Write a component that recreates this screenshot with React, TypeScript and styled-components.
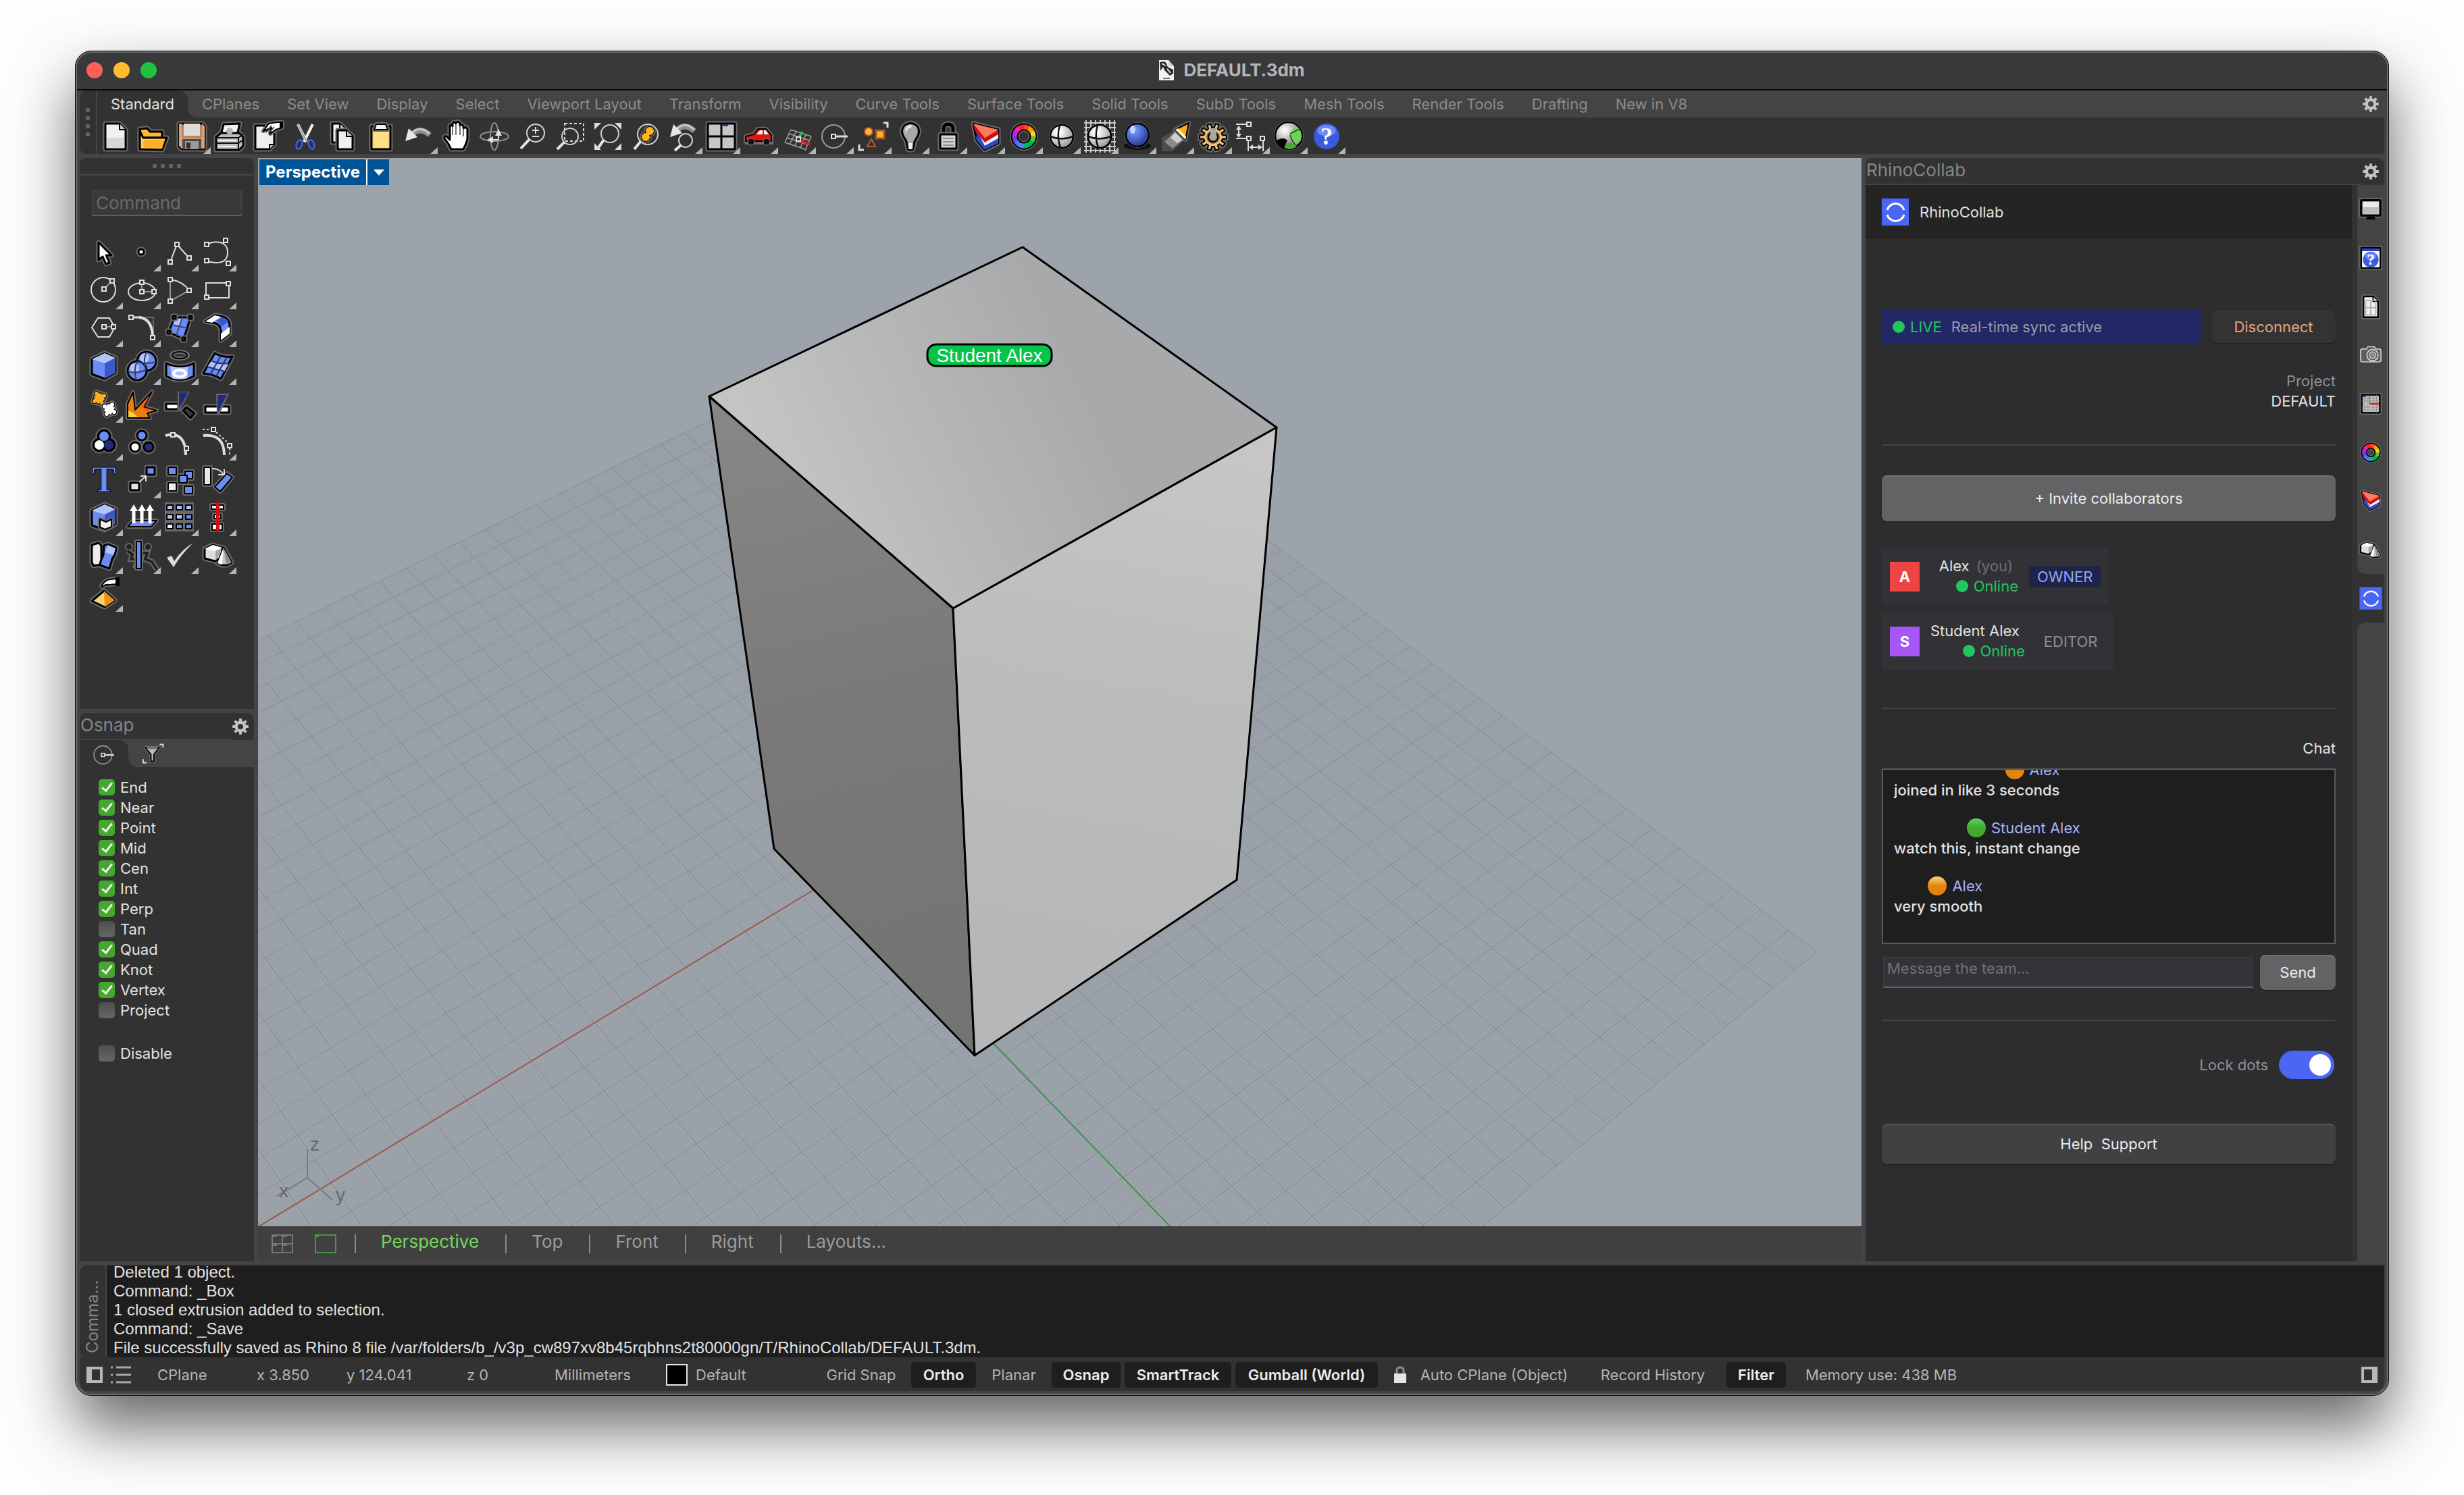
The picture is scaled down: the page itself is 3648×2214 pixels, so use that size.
import React, { useId, useState } from 'react';
import styled, { createGlobalStyle, css } from 'styled-components';

const C = {
  frame: '#444444',
  panel: '#323232',
  dark: '#1e1e1e',
  text: '#e2e2e2',
  dim: '#868686',
  halo: '#6a6a6a',
  blue: '#6b8cf5',
  pale: '#b4c4fa',
  navy: '#232b78',
  live: '#22c65f',
};
const UI = `Inter, "Liberation Sans", sans-serif`;

const Global = createGlobalStyle`
  * { box-sizing: border-box; }
  body { margin: 0; background: #fdfdfd; font-family: ${UI}; font-size: 22px; line-height: 30px; color: ${C.text}; }
  button, input { font: inherit; color: inherit; margin: 0; }
  button { border: 0; padding: 0; background: none; cursor: pointer; }
`;

/* ---------- icon drawing helpers ---------- */

type Part = [string, string];
const circ = (x: number, y: number, r: number, ry = r) =>
  `M${x - r} ${y}a${r} ${ry} 0 1 0 ${2 * r} 0a${r} ${ry} 0 1 0 ${-2 * r} 0Z`;
const box = (x: number, y: number, w: number, h: number) => `M${x} ${y}h${w}v${h}h${-w}Z`;
const gear = (x: number, y: number, ro: number, ri: number, n = 8) => {
  let d = '';
  for (let i = 0; i < n; i++) {
    const a = (i / n) * Math.PI * 2;
    const p = (r: number, o: number) => `${(x + r * Math.cos(a + o)).toFixed(2)} ${(y + r * Math.sin(a + o)).toFixed(2)}`;
    const w = Math.PI / n;
    d += `${i ? 'L' : 'M'}${p(ri, -w * 0.62)}L${p(ro, -w * 0.42)}L${p(ro, w * 0.42)}L${p(ri, w * 0.62)}`;
  }
  return d + 'Z';
};

/* Filled shapes with the black edge and grey halo shared by the icon set.
   With merge, the parts share one outer edge. */
const Solid = ({ p, w = 3, merge = false }: { p: Part[]; w?: number; merge?: boolean }) => (
  <g strokeLinejoin="round">
    {p.map(([d], i) => <path key={`h${i}`} d={d} fill="none" stroke={C.halo} strokeWidth={w + 4} />)}
    {p.map(([d, f], i) => <path key={`s${i}`} d={d} fill={f} stroke="#000" strokeWidth={w} />)}
    {merge && p.map(([d, f], i) => <path key={`m${i}`} d={d} fill={f} />)}
  </g>
);
const Line = ({ d, c = '#dcdcdc', w = 2, dash }: { d: string; c?: string; w?: number; dash?: string }) => (
  <path d={d} fill="none" stroke={c} strokeWidth={w} strokeDasharray={dash} />
);
const Nodes = ({ at }: { at: [number, number][] }) => (
  <>{at.map(([x, y], i) => <rect key={i} x={x - 3} y={y - 3} width={6} height={6} fill={C.panel} stroke="#e0e0e0" strokeWidth={2} />)}</>
);
const Fill = ({ d, f }: { d: string; f: string }) => <path d={d} fill={f} />;

const Wheel = ({ x = 28, y = 28, r = 14, w = 7 }) => {
  const cs = ['#ff4a1c', '#ff9d00', '#ffd21f', '#4fc83a', '#00b83c', '#00b86a', '#4a86f0', '#5a6cf2', '#6a3fe0', '#c01ff0', '#ff1fb0', '#ff1f2a'];
  return (
    <g>
      <circle cx={x} cy={y} r={r} fill="none" stroke={C.halo} strokeWidth={w + 7} />
      <circle cx={x} cy={y} r={r} fill="none" stroke="#000" strokeWidth={w + 4} />
      {cs.map((c, i) => {
        const a = (i * Math.PI) / 6 - Math.PI / 2;
        const b = a + Math.PI / 6 + 0.03;
        return <path key={i} d={`M${x + r * Math.cos(a)} ${y + r * Math.sin(a)}A${r} ${r} 0 0 1 ${x + r * Math.cos(b)} ${y + r * Math.sin(b)}`} fill="none" stroke={c} strokeWidth={w} />;
      })}
    </g>
  );
};
const Lens = ({ x, y, r, hx, hy }: { x: number; y: number; r: number; hx: number; hy: number }) => {
  const k = r * 0.7;
  return (
    <>
      <circle cx={x} cy={y} r={r} fill="none" stroke="#d0d0d0" strokeWidth={2} />
      <path d={`M${x - k} ${y + k}L${hx} ${hy}`} stroke="#e4e4e4" strokeWidth={4} />
    </>
  );
};
const Ball = ({ x = 28, y = 28, r = 17, from = '#ffffff', to = '#8c8c8c' }) => {
  const id = useId();
  return (
    <>
      <radialGradient id={id} cx="0.35" cy="0.3" r="0.8"><stop offset="0.1" stopColor={from} /><stop offset="1" stopColor={to} /></radialGradient>
      <circle cx={x} cy={y} r={r + 2} fill={C.halo} />
      <circle cx={x} cy={y} r={r} fill={`url(#${id})`} stroke="#000" strokeWidth={2.5} />
    </>
  );
};
const Wedge = () => (
  <>
    <Solid p={[['M9 9L46 18V38L26 48L14 34Z', '#2c49c0']]} />
    <Fill d="M9 9L26 42L46 31V18L26 30Z" f="#f4f4f4" />
    <Fill d="M12 27L26 42L46 31V38L26 48L14 34Z" f="#2c49c0" />
    <Fill d="M9 9L26 30L46 18V25L26 37L11 19Z" f="#cf1010" />
    <Fill d="M9 9L46 18L26 30Z" f="#ff7a5c" />
  </>
);
const Solids = () => (
  <>
    <Solid p={[['M9 19L21 13L35 17V31L24 37L9 33Z', '#dedede'], ['M37 17L49 39Q39 47 28 40Z', '#c4c4c4']]} />
    <Fill d="M9 19L21 13L35 17L25 22Z" f="#fff" />
    <Fill d="M25 22L34 18L28 33L25 36Z" f="#a4a4a4" />
    <Fill d="M37 17L35 42Q31 42 28 40Z" f="#fff" />
    <Fill d="M37 17L49 39Q45 42 41 42Z" f="#8c8c8c" />
  </>
);
const SyncLogo = () => (
  <>
    <rect width={40} height={40} fill="#4a66f2" />
    <path d="M8 17A13 13 0 0 1 33 17M8 24A13 13 0 0 0 33 24" fill="none" stroke="#fff" strokeWidth={3} />
  </>
);
const Hand = () => (
  <>
    <Solid w={3} p={[['M20 47Q16 38 10 31Q9 27 13 28L18 33V13Q19 9 22 13V9Q24 5 27 9V8Q30 4 33 9V12Q36 9 38 13V16Q42 13 44 17V32Q42 40 38 47Z', '#fff']]} />
    <Line c="#444" w={1.5} d="M22 13V26M27 10V26M33 11V26M38 15V28" />
  </>
);
const Question = ({ r = 19, size = 36 }) => (
  <>
    <circle cx={28} cy={28} r={r} fill="#3a5ae0" />
    <ellipse cx={28} cy={28 - r * 0.45} rx={r * 0.72} ry={r * 0.45} fill="#6f8af5" />
    <text x={28} y={28 + size * 0.34} fontFamily="Liberation Serif" fontWeight={700} fontSize={size} textAnchor="middle" fill="#fff">?</text>
  </>
);
const SnapRing = () => (
  <>
    <circle cx={26} cy={28} r={17} fill="none" stroke="#9a9a9a" strokeWidth={2} />
    <Line d="M30 28H47" w={3} />
    <Nodes at={[[26, 28]]} />
  </>
);
const BackArrow = () => (
  <>
    <Line d="M18 25Q30 13 44 26" c="#8e8e8e" w={8} />
    <Line d="M18 23Q30 11 44 24" c="#c8c8c8" w={3} />
    <Fill d="M8 35L13 16L26 29Z" f="#e6e6e6" />
  </>
);
const Paper = ({ x = 12, y = 9, w = 30, h = 38 }) => (
  <>
    <Solid p={[[`M${x} ${y}h${w - 9}l9 9v${h - 9}h${-w}Z`, '#f0f0f0']]} />
    <path d={`M${x + w - 9} ${y}v9h9`} fill="#cfcfcf" stroke="#000" strokeWidth={2} />
  </>
);

/* ---------- toolbar icons, drawn on a 56 x 54 cell ---------- */

const toolbar: [string, React.ReactNode, boolean?][] = [
  ['New', <><Paper /><Fill d="M14 30H40V45H14Z" f="#d8d8d8" /></>],
  ['Open', <><Solid p={[['M7 17L18 16L22 21H40V30H7Z', '#ffb92e'], ['M7 47V20L12 30H47L40 48Z', '#fbcf63']]} /><Fill d="M12 38L14 33H44L40 46H13Z" f="#ffb02a" /></>],
  ['Save', <><Solid p={[['M9 9H43L47 13V47H13L9 43Z', '#bd8564']]} /><Fill d="M9 9H13V31H43V9L47 13V46H13L9 42Z" f="#d8a27c" /><Fill d={box(16, 9, 24, 18)} f="#dcdcdc" /><Fill d={box(14, 32, 28, 15)} f="#4c4c4c" /><Fill d={box(18, 35, 20, 12)} f="#9a9a9a" /><Fill d={box(20, 37, 6, 9)} f="#333" /></>, true],
  ['Print', <><Solid p={[['M19 10L43 9L38 30H14Z', '#f4f4f4'], ['M8 29L15 23H42L48 29V42L42 48H8Z', '#bdbdbd']]} /><circle cx={28} cy={20} r={5} fill="#b9b9b9" /><Line c="#111" d="M8 30H41L48 25M8 38H41L48 33M41 30V47" /><Line c="#f4f4f4" d="M11 34H38M11 43H38" /></>],
  ['Document properties', <><Solid p={[['M10 12H38V40L31 47H10Z', '#eeeeee']]} /><path d="M31 47V40H38" fill="#bbb" stroke="#000" strokeWidth={2} /><Solid w={2} p={[['M22 20L30 9L42 7H50V15L40 18L32 24L34 15Z', '#fff']]} /><Line c="#333" w={1.5} d="M26 22L34 12M30 23L38 14" /><Fill d={box(46, 6, 5, 10)} f="#000" /></>],
  ['Cut', <><Line d="M17 10L30 36M39 10L26 36" w={4} c="#efefef" /><Line d="M17 10L30 36" w={2} c="#9b9b9b" /><ellipse cx={19} cy={40} rx={4} ry={7} fill="none" stroke="#3d5cf0" strokeWidth={2.5} transform="rotate(20 19 40)" /><ellipse cx={37} cy={40} rx={4} ry={7} fill="none" stroke="#3d5cf0" strokeWidth={2.5} transform="rotate(-20 37 40)" /></>],
  ['Copy', <><Paper x={12} y={9} w={20} h={28} /><Paper x={20} y={19} w={22} h={28} /></>],
  ['Paste', <><Solid p={[['M14 13H42V47H14Z', '#fbd36c']]} /><Fill d={box(17, 20, 22, 24)} f="#fddf86" /><Solid w={2} p={[['M21 10H35L38 18H18Z', '#f3f3f3']]} /></>],
  ['Undo', <BackArrow />, true],
  ['Pan', <Hand />],
  ['Rotate view', <><ellipse cx={28} cy={28} rx={21} ry={7} fill="none" stroke="#8e8e8e" strokeWidth={2} /><ellipse cx={28} cy={28} rx={6} ry={20} fill="none" stroke="#8e8e8e" strokeWidth={2} /><Fill d="M17 33L26 28V38ZM34 17L39 27H29Z" f="#e2e2e2" /><Line d="M24 33H34M34 24V33" /></>],
  ['Zoom', <><Lens x={33} y={23} r={13} hx={11} hy={46} /><Line d="M28 19H38M33 14V24M28 28H38" /></>],
  ['Zoom window', <><Line d="M20 9H48V35H20Z" dash="4 3" /><Lens x={28} y={28} r={12} hx={9} hy={47} /></>],
  ['Zoom extents', <><Lens x={31} y={24} r={13} hx={13} hy={46} /><Fill d="M8 8H18L8 18ZM48 8V18L38 8ZM48 48H38L48 38ZM8 48V38L18 48Z" f="#dcdcdc" /></>],
  ['Zoom selected', <><Lens x={31} y={25} r={15} hx={11} hy={47} /><Solid w={2} merge p={[[circ(34, 20, 6), '#ffb81c'], [circ(28, 29, 6), '#ffb81c']]} /></>],
  ['Undo view change', <><g transform="translate(0 -6)"><BackArrow /></g><Lens x={31} y={34} r={10} hx={15} hy={49} /></>, true],
  ['Four viewports', <><Solid p={[[box(8, 9, 40, 38), '#c6c6c6']]} /><Line c="#000" w={3} d="M28 9V47M8 28H48" /><Fill d={box(30, 10, 8, 3)} f="#26348f" /></>, true],
  ['Shade', <><Fill d={box(7, 36, 42, 4)} f="#707070" /><Solid w={2} p={[['M8 35V28L20 25L26 17H38L46 26V35Z', '#e01212']]} /><Fill d="M24 25L29 19H33V25ZM35 19H38L42 25H35Z" f="#f3f3f3" /><circle cx={16} cy={36} r={5} fill="#111" stroke="#888" /><circle cx={39} cy={36} r={5} fill="#111" stroke="#888" /></>, true],
  ['Construction planes', <><Line c="#a2a2a2" w={1.5} d="M19 18L49 28M16 24L46 34M13 30L43 40M10 37L40 47M19 18L10 37M27 20L17 40M34 23L25 42M41 25L33 45M49 28L40 49" /><Line c="#2fb64a" w={4} d="M31 30L36 21" /><Line c="#e01818" w={4} d="M32 34L47 40" /><Nodes at={[[30, 32]]} /></>, true],
  ['Object snap', <SnapRing />, true],
  ['Select', <><Line w={3} d="M44 8H50V15M8 40V48H15" /><circle cx={22} cy={21} r={6} fill="#ffb81c" stroke="#a3503a" strokeWidth={2} /><rect x={33} y={19} width={12} height={12} fill="#ffb81c" stroke="#a3503a" strokeWidth={3} /><Line c="#b05a42" w={2} d="M26 32L32 43H20Z" /></>, true],
  ['Hide', <><Solid p={[['M23 42Q23 35 18 29Q13 20 18 13Q28 4 38 13Q43 20 38 29Q33 35 33 42L31 48H25Z', '#a8a8a8']]} /><Fill d="M20 18Q22 11 29 11Q32 14 26 16Q22 18 22 24Z" f="#e4e4e4" /><Fill d={box(25, 38, 6, 9)} f="#efefef" /></>, true],
  ['Lock', <><path d="M21 26V17Q21 10 28 10T35 17V26" fill="none" stroke={C.halo} strokeWidth={9} /><path d="M21 26V17Q21 10 28 10T35 17V26" fill="none" stroke="#000" strokeWidth={5} /><Solid p={[[box(16, 25, 24, 21), '#d4d4d4']]} /><Line c="#8f8f8f" d="M20 31H36M20 36H36M20 41H36" /></>, true],
  ['Layers', <Wedge />, true],
  ['Properties', <Wheel />, true],
  ['Display mode', <><Ball /><Line c="#111" w={2.5} d="M25 11Q20 28 26 45M11 28Q28 35 45 28" /></>, true],
  ['Render mesh', <><Line c="#c9c9c9" d="M8 4V52M15 4V52M22 4V52M29 4V52M36 4V52M43 4V52M50 4V52M5 8H52M5 15H52M5 22H52M5 29H52M5 36H52M5 43H52M5 49H52" /><Ball /><Line c="#111" w={2.5} d="M25 11Q20 28 26 45M11 28Q28 35 45 28" /></>, true],
  ['Render', <><ellipse cx={28} cy={42} rx={20} ry={6} fill="#111" /><Ball y={26} from="#6f95ff" to="#1c2a86" /><ellipse cx={21} cy={18} rx={4} ry={6} fill="#c4d6ff" /></>, true],
  ['Spotlight', <><Fill d="M28 18L44 32L24 50H8V30Z" f="#4c4c4c" /><Fill d="M29 20L42 31L24 46L12 36Z" f="#8a8a8a" /><Fill d="M29 20L42 31L31 38L21 30Z" f="#d0d0d0" /><Solid w={2} p={[['M28 18L48 8L43 33Z', '#ffac1e']]} /><Fill d="M28 18L32 16L44 28L43 33Z" f="#fff0b8" /></>, true],
  ['Options', <><Solid w={2} p={[[gear(28, 29, 20, 14, 10), '#f5bd6c']]} /><Solid w={2} p={[[circ(28, 29, 7), '#c48a3c']]} /><Fill d="M24 16H33V31Q28 35 24 31Z" f="#a8a8a8" /></>, true],
  ['Dimension', <><Line d="M6 10H22M6 31H22M46 34V50M24 34V50M10 15V27M27 44H43" /><Fill d="M10 12L14 18H6ZM10 30L6 24H14ZM25 44L31 40V48ZM45 44L39 40V48Z" f="#dcdcdc" /><Nodes at={[[25, 10], [25, 31], [45, 31]]} /></>, true],
  ['Grasshopper', <><Ball x={28} y={27} r={20} from="#f4f4f4" to="#4c4c4c" /><Fill d="M30 24Q36 13 43 16Q49 24 46 34Q42 40 36 40Q30 34 30 24Z" f="#6fd05a" /><Fill d="M22 45Q24 36 32 38L40 43Q30 50 22 45Z" f="#4aa83a" /><Fill d="M10 34Q20 28 26 34L24 38L21 45Q13 42 10 34Z" f="#000" /><Line c="#1d4a16" w={1.5} d="M30 24Q38 20 44 17M30 26Q33 36 38 40" /></>, true],
  ['Help', <Question />, true],
];

/* ---------- palette icons, drawn on a 56 x 56 cell ---------- */

const Cube = () => (
  <>
    <Solid p={[['M10 18L29 9L45 16V38L29 47L10 40Z', C.blue]]} />
    <Fill d="M10 18L29 9L45 16L29 24Z" f={C.pale} />
    <Fill d="M29 24L45 16V38L29 47Z" f="#3c58c4" />
  </>
);
const puzzle = (f: string): Part[] => [[box(-6, -6, 12, 12), f], [circ(-8, 0, 3), f], [circ(8, 0, 3), f], [circ(0, -8, 3), f], [circ(0, 8, 3), f]];

const palette: [string, React.ReactNode, boolean?][] = [
  ['Select objects', <Solid p={[['M20 13V39L26 34L31 45L36 43L31 32H39Z', '#fff']]} />],
  ['Point', <Solid w={3} p={[[circ(27, 27, 4), '#fff']]} />, true],
  ['Polyline', <><Line d="M14 42L24 16L42 36" /><Nodes at={[[14, 42], [24, 16], [42, 36]]} /></>, true],
  ['Control point curve', <><Line d="M12 16L20 13Q43 10 43 28Q43 44 24 43L12 41" /><Nodes at={[[12, 16], [40, 10], [12, 40], [44, 44]]} /></>, true],
  ['Circle', <><circle cx={27} cy={27} r={18} fill="none" stroke="#dcdcdc" strokeWidth={2} /><Line c="#999" d="M28 26L40 14" /><Nodes at={[[28, 26], [40, 14]]} /></>, true],
  ['Ellipse', <><ellipse cx={28} cy={30} rx={20} ry={13} fill="none" stroke="#dcdcdc" strokeWidth={2} /><Line c="#999" d="M28 16V30H46" /><Nodes at={[[28, 16], [28, 30], [46, 30]]} /></>, true],
  ['Arc', <><Line c="#999" d="M14 12V44L42 28" /><Line d="M14 12Q32 14 42 28" /><Nodes at={[[14, 12], [42, 28], [14, 44]]} /></>, true],
  ['Rectangle', <><Line d="M11 17H45V39H11Z" /><Nodes at={[[44, 18], [12, 38]]} /></>, true],
  ['Polygon', <><Line d="M10 27L19 13H36L44 27L36 41H19Z" /><Line c="#999" d="M28 26H42" /><Nodes at={[[28, 26], [42, 26]]} /></>, true],
  ['Fillet curves', <><Line c="#999" w={1} d="M12 12H45V42" /><Line w={4} d="M24 12Q43 14 44 40" /><Line w={3} d="M12 12H28" /><Nodes at={[[12, 12], [44, 42]]} /></>, true],
  ['Surface from points', <><Solid p={[['M20 12H44L34 44L12 34Z', C.blue]]} /><Fill d="M22 14H31L27 24L19 22Z" f={C.pale} /><Line c="#3a4a7a" d="M16 23L39 28M32 12L23 39" /><Solid w={3} p={[[box(18, 10, 4, 4), '#fff'], [box(42, 10, 4, 4), '#fff'], [box(32, 42, 4, 4), '#fff'], [box(10, 32, 4, 4), '#fff']]} /></>, true],
  ['Fillet surface', <><Solid p={[['M10 18L24 9Q46 10 46 24V36L33 46V34Q33 20 20 20Z', C.blue]]} /><Fill d="M10 18L24 9L33 11L20 20Z" f="#fff" /><Fill d="M33 36L46 26V36L33 46Z" f="#fff" /><Fill d="M26 17L36 12Q42 14 44 18L34 26Q32 20 26 17Z" f="#3557cf" /></>, true],
  ['Box', <Cube />, true],
  ['Boolean union', <><Solid p={[[circ(35, 21, 14), C.blue], [circ(21, 35, 14), C.blue]]} /><Fill d={circ(32, 16, 7)} f={C.pale} /><Fill d={circ(17, 31, 7)} f={C.pale} /><Line c="#33406c" d="M35 7Q29 20 34 34M21 22Q35 26 49 22M21 21Q15 35 20 49M7 36Q20 40 34 34" /></>, true],
  ['Project curves', <><ellipse cx={28} cy={12} rx={12} ry={5} fill="none" stroke={C.halo} strokeWidth={6} /><ellipse cx={28} cy={12} rx={11} ry={5} fill="none" stroke="#000" strokeWidth={2} /><Solid p={[['M8 24Q28 34 49 24V43Q28 54 8 43Z', C.blue]]} /><Fill d="M14 28Q28 32 40 29V46Q28 50 16 46Z" f={C.pale} /><ellipse cx={28} cy={39} rx={9} ry={5} fill="none" stroke="#fff" strokeWidth={4} /></>, true],
  ['Mesh', <><Solid p={[['M24 9Q36 16 50 14L33 47Q22 40 7 39Z', C.blue]]} /><Fill d="M20 19Q30 26 45 24L38 37Q28 33 13 29Z" f={C.pale} /><Line c="#26336c" d="M33 13L17 41M42 15L26 43M19 20Q30 26 45 24M13 29Q25 33 39 36" /></>, true],
  ['Join', <><g transform="translate(21 20) rotate(-30)"><Solid merge w={2} p={puzzle('#ffae22')} /></g><g transform="translate(36 36) rotate(30)"><Solid merge w={2} p={puzzle('#fff')} /></g></>, true],
  ['Explode', <><Solid w={2} p={[['M7 49V28L15 11L18 37L43 10L31 33L50 38L36 42L40 49Z', '#e8820c']]} /><Fill d="M8 48V38L16 42L22 48Z" f="#ffcf3a" /><Fill d="M26 33L41 14L30 33L47 38L36 40Z" f="#ff5a1c" /></>],
  ['Trim', <><Solid p={[['M33 38L38 33L50 42L44 49Z', '#3a3a3a'], [box(8, 28, 18, 8), '#fff']]} /><Fill d="M25 10H43L28 38H25Z" f={C.halo} /><Fill d="M27 11H41L27 36Z" f={C.navy} /></>],
  ['Split', <><Solid p={[[box(10, 32, 35, 9), '#fff']]} /><Fill d="M26 13H45L31 43H27Z" f={C.halo} /><Fill d="M28 15H42L28 42Z" f={C.navy} /></>],
  ['Group', <Solid w={7} merge p={[[circ(21, 33, 7), '#fff'], [circ(35, 33, 7), C.navy], [circ(28, 20, 7), C.blue]]} />, true],
  ['Ungroup', <Solid w={3} p={[[circ(28, 19, 7), C.blue], [circ(18, 36, 7), '#fff'], [circ(38, 36, 7), C.navy]]} />],
  ['Curve edit points', <><Line w={4} d="M7 19Q37 12 37 48" /><Nodes at={[[18, 18], [38, 38]]} /></>],
  ['Control points on', <><Line w={4} d="M7 19Q38 16 38 48" /><Line w={2} dash="3 3" d="M6 10H20M26 14L44 30M46 38V50" /><Nodes at={[[22, 10], [46, 34]]} /></>, true],
  ['Text', <text x={28} y={46} fontFamily="Liberation Serif" fontWeight={700} fontSize={54} textAnchor="middle" fill={C.blue} stroke="#000" strokeWidth={1}>T</text>],
  ['Move', <><Solid p={[[box(11, 33, 13, 11), '#e4e4e4'], [box(35, 10, 12, 11), C.blue]]} /><Line d="M24 32L33 24M26 23H34V31" /></>, true],
  ['Copy objects', <Solid w={2} p={[[box(11, 10, 12, 11), C.blue], [box(11, 33, 12, 12), '#f0f0f0'], [box(36, 16, 11, 11), C.blue], [box(27, 22, 12, 11), C.blue], [box(35, 38, 12, 11), C.blue]]} />],
  ['Rotate', <><Solid w={2} p={[[box(8, 10, 10, 26), '#e6e6e6'], ['M24 39L42 19L50 25L32 46Z', C.blue]]} /><Line d="M20 12Q32 12 37 21M29 21H38V13" /></>],
  ['Solid edit', <><Cube /><Solid w={2} p={[['M22 31L31 35L39 31V42L30 46L22 43Z', '#f0f0f0']]} /></>, true],
  ['Extrude', <><Solid w={2} p={[['M7 42L15 33H50L42 42Z', C.blue]]} /><Line c="#fff" w={5} d="M16 18V37M28 18V37M40 18V37" /><Fill d="M16 9L22 19H10ZM28 9L34 19H22ZM40 9L46 19H34Z" f="#fff" /></>, true],
  ['Array', <><Fill d={box(6, 6, 43, 43)} f={C.halo} /><Solid w={2} p={[10, 24, 38].flatMap((y, r) => [9, 23, 37].map((x, c): Part => [box(x, y, 9, 7), r === 2 && c === 0 ? '#f0f0f0' : c + r > 2 ? C.blue : C.pale]))} /></>, true],
  ['Align', <><Solid w={2} p={[[box(19, 10, 18, 6), '#f4f4f4'], [box(23, 24, 10, 6), '#f4f4f4'], [box(20, 38, 15, 9), '#f4f4f4']]} /><Fill d={box(26, 6, 5, 44)} f="#d01010" /></>, true],
  ['Bend', <><Solid p={[['M10 13L20 10L24 14V42L12 44V42L10 40Z', '#ececec'], ['M28 14L34 12L46 17Q46 26 40 34L36 48L22 43Q22 38 27 28Z', C.blue]]} /><Fill d="M33 13L45 18L42 28L30 24Z" f={C.pale} /></>, true],
  ['Check objects', <><circle cx={9} cy={16} r={5} fill="#222" stroke={C.halo} strokeWidth={2} /><circle cx={37} cy={16} r={5} fill="#222" stroke={C.halo} strokeWidth={2} /><Line c={C.halo} w={8} d="M7 22L14 27L12 34H22L18 48M26 25H36L33 34L43 38L50 49" /><Line c="#222" w={4} d="M7 22L14 27L12 34H22L18 48M26 25H36L33 34L43 38L50 49" /><Solid w={2} p={[[box(20, 8, 7, 40), C.blue]]} /></>, true],
  ['Accept', <Fill d="M9 32L16 29L20 37Q32 19 48 10Q30 27 19 46Z" f="#dcdcdc" />, true],
  ['Render tools', <Solids />, true],
  ['Drag mode', <><Solid p={[['M28 25L44 39L29 49L10 40Z', '#fbd36c']]} /><Fill d="M28 25L44 39L29 49Z" f="#e8901c" /><Solid w={2} p={[['M24 18Q30 8 38 8L46 7V15L36 16Q30 15 26 19Z', '#fff']]} /><Fill d={box(45, 5, 6, 13)} f="#000" /></>, true],
];

const sideTabs: [string, React.ReactNode][] = [
  ['Display', <><Solid p={[[box(11, 12, 34, 27), '#d8d8d8']]} w={4} /><Fill d={box(14, 15, 28, 21)} f="#bdbdbd" /><Fill d={box(14, 15, 28, 9)} f="#ededed" /><Fill d="M22 41H34L37 46H19Z" f="#000" /></>],
  ['Help', <><Solid w={3} p={[[box(11, 10, 34, 36), '#fff']]} /><Fill d={box(12, 11, 32, 5)} f="#2a44b8" /><g transform="translate(5 8) scale(.82)"><Question r={17} size={34} /></g></>],
  ['Layouts', <><Paper x={15} y={10} w={26} h={37} /><Line c="#aaa" d="M19 17H37V43H19ZM28 17V43M19 30H37" /></>],
  ['Named views', <><path d="M10 20Q10 17 13 17H20L23 13H34L37 17H43Q46 17 46 20V37Q46 40 42 40H14Q10 40 10 37Z" fill="#5c5c5c" stroke="#d0d0d0" strokeWidth={2} /><circle cx={31} cy={28} r={10} fill="#5c5c5c" stroke="#d8d8d8" strokeWidth={2} /><circle cx={31} cy={28} r={6} fill="#8a8a8a" stroke="#ccc" strokeWidth={1.5} /></>],
  ['Named planes', <><Solid w={3} p={[[box(12, 12, 32, 32), '#c0c0c0']]} /><Line c="#8a8a8a" w={1} d="M17 12V44M23 12V44M32 12V44M38 12V44M12 18H44M12 23H44M12 34H44M12 39H44" /><Line c="#3eae3e" w={2} d="M26 13V28" /><Line c="#e01818" w={3} d="M26 28H43" /><Fill d={box(13, 13, 6, 3)} f="#26348f" /></>],
  ['Properties', <Wheel r={12} />],
  ['Layers', <g transform="translate(4 3) scale(.86)"><Wedge /></g>],
  ['Rendering', <g transform="translate(2 4) scale(.88)"><Solids /></g>],
  ['RhinoCollab', <g transform="translate(8 8)"><SyncLogo /></g>],
];

/* ---------- window frame ---------- */

const Page = styled.div`
  display: flex;
  min-height: 100vh;
  padding: 75px 111px 147px;
`;
const Window = styled.div`
  flex: 1;
  min-width: 0;
  display: flex;
  flex-direction: column;
  border: 1px solid #050505;
  border-radius: 24px;
  background: ${C.frame};
  box-shadow: 0 46px 90px rgba(0, 0, 0, 0.6), inset 0 0 0 2px #6c6e6b;
  overflow: hidden;
`;
const TitleBar = styled.header`
  height: 56px;
  margin: 2px 2px 0;
  padding: 0 14px 2px;
  display: grid;
  grid-template-columns: 1fr auto 1fr;
  align-items: center;
  background: #38393b;
  border-bottom: 2px solid #0a0a0a;
  border-radius: 22px 22px 0 0;
`;
const Lights = styled.div`
  display: flex;
  gap: 16px;
`;
const Light = styled.button<{ $c: string }>`
  width: 24px;
  height: 24px;
  border-radius: 50%;
  background: ${(p) => p.$c};
`;
const Title = styled.h1`
  margin: 0;
  display: flex;
  align-items: center;
  gap: 14px;
  font-size: 26px;
  line-height: 32px;
  font-weight: 700;
  color: #b4b5b6;
`;
const Workspace = styled.div`
  flex: 1;
  min-height: 0;
  display: flex;
  flex-direction: column;
  padding: 0 6px 6px;
`;

/* ---------- toolbar ---------- */

const Dock = styled.div`
  display: grid;
  grid-template-columns: 24px minmax(0, 1fr);
  gap: 2px;
`;
const Grip = styled.div<{ $row?: boolean }>`
  display: flex;
  flex-direction: ${(p) => (p.$row ? 'row' : 'column')};
  align-items: center;
  justify-content: center;
  gap: 6px;
  background: ${C.panel};
  border-radius: ${(p) => (p.$row ? '10px 10px 0 0' : '10px 0 0 10px')};
  i { width: 6px; height: 6px; border: 2px solid #727272; border-radius: 50%; }
`;
const Tabs = styled.nav`
  display: flex;
  gap: 1px;
  height: 40px;
`;
const Tab = styled.button<{ $on?: boolean }>`
  position: relative;
  padding: 0 20px;
  white-space: nowrap;
  color: #8c8c8c;
  ${(p) => p.$on && css`
    color: ${C.text};
    background: ${C.panel};
    border-radius: 0 14px 0 0;
    &::after {
      content: '';
      position: absolute;
      right: -14px;
      bottom: 0;
      width: 14px;
      height: 14px;
      background: radial-gradient(circle at 100% 0, transparent 14px, ${C.panel} 14px);
    }
  `}
`;
const GearButton = styled.button`
  width: 40px;
  margin-left: auto;
  display: grid;
  place-items: center;
`;
const ToolRow = styled.div`
  display: flex;
  height: 54px;
  background: ${C.panel};
`;
const Tool = styled.button<{ $more?: boolean }>`
  position: relative;
  width: 56px;
  height: 56px;
  display: block;
  svg { display: block; overflow: visible; }
  ${(p) => p.$more && css`
    &::after {
      content: '';
      position: absolute;
      right: 0;
      bottom: 0;
      border: solid transparent;
      border-width: 0 0 10px 11px;
      border-bottom-color: #b4b4b4;
    }
  `}
`;
const BarTool = styled(Tool)`
  height: 54px;
`;

const Gear = () => (
  <svg width={26} height={26} viewBox="0 0 26 26">
    <path fillRule="evenodd" fill="#c2c2c2" d={gear(13, 13, 12, 8.5) + circ(13, 13, 4)} />
  </svg>
);

/* ---------- left column ---------- */

const Main = styled.div`
  flex: 1;
  min-height: 0;
  margin: 6px 0;
  display: grid;
  grid-template-columns: 258px minmax(0, 1fr) 768px;
  gap: 6px;
`;
const LeftColumn = styled.div`
  display: grid;
  grid-template-rows: 204fr 203fr;
  gap: 6px;
  min-height: 0;
`;
const Panel = styled.section`
  background: ${C.panel};
  border-radius: 10px 10px 0 0;
  min-height: 0;
`;
const GripBar = styled(Grip)`
  height: 26px;
  border-bottom: 2px solid ${C.frame};
`;
const CommandBox = styled.input`
  display: block;
  width: 222px;
  height: 38px;
  margin: 22px 18px 26px;
  padding: 0 5px;
  font-size: 26px;
  background: #393939;
  border: 1px solid #484848;
  border-bottom: 2px solid #606060;
  outline: none;
  &::placeholder { color: #6a6a6a; opacity: 1; }
`;
const Palette = styled.div`
  display: grid;
  grid-template-columns: repeat(4, 56px);
  padding-left: 8px;
`;
const PanelHead = styled.div`
  display: flex;
  height: 40px;
  h2 {
    flex: 1;
    margin: 0;
    padding-left: 1px;
    font-size: 26px;
    line-height: 36px;
    font-weight: 400;
    color: ${C.dim};
    border-bottom: 2px solid ${C.frame};
  }
  button { width: 34px; padding-right: 6px; }
`;
const IconTabs = styled.div`
  display: flex;
  height: 40px;
  background: ${C.frame};
`;
const IconTab = styled(Tab)`
  width: 72px;
  padding: 0;
  display: grid;
  place-items: center;
`;
const Checks = styled.div`
  padding: 15px 28px;
`;
const Check = styled.label<{ $apart?: boolean }>`
  display: flex;
  align-items: center;
  gap: 8px;
  height: 30px;
  margin-top: ${(p) => (p.$apart ? '34px' : '0')};
  input {
    appearance: none;
    display: grid;
    place-items: center;
    width: 24px;
    height: 24px;
    border-radius: 5px;
    background: linear-gradient(#4e4e4e, #666);
  }
  input:checked { background: #43a82b; }
  input:checked::after {
    content: '';
    width: 6px;
    height: 13px;
    margin-bottom: 4px;
    border: solid #f0f0f0;
    border-width: 0 3px 3px 0;
    rotate: 38deg;
  }
`;

/* ---------- viewport ---------- */

const Center = styled.div`
  display: flex;
  flex-direction: column;
  min-width: 0;
`;
const Canvas = styled.div`
  position: relative;
  flex: 1;
  min-height: 0;
  background: #9ca3ab;
  > svg { position: absolute; inset: 0; width: 100%; height: 100%; }
`;
const ViewTitle = styled.div`
  position: absolute;
  left: 2px;
  top: 2px;
  display: flex;
  height: 38px;
  gap: 2px;
  background: #fff;
  button { background: #005496; color: #fff; font-size: 24px; font-weight: 700; padding: 0 9px; }
  button + button { width: 32px; display: grid; place-items: center; }
`;
const ViewTabs = styled.nav`
  display: flex;
  align-items: center;
  height: 52px;
  padding: 0 20px;
  background: #404040;
`;
const ViewModes = styled.div`
  display: flex;
  gap: 32px;
  margin-right: 27px;
`;
const ViewTab = styled.button<{ $on?: boolean }>`
  padding: 0 39px 6px;
  height: 52px;
  font-size: 26px;
  color: ${(p) => (p.$on ? '#74d860' : '#9c9c9c')};
  position: relative;
  &::before { content: ''; position: absolute; left: 0; top: 12px; height: 28px; width: 2px; background: #8a8a8a; }
`;

/* Ground grid: 40 major cells a side, projected to the screen */
const project = (i: number, j: number) => {
  const w = 1 + 0.008264 * i - 0.006846 * j;
  const x = (1454 - 57.6 * i - 62.86 * j) / w;
  const y = (949 - 40.34 * i + 33.59 * j) / w;
  return `${(x / 1.6333 + 1800).toFixed(1)} ${(y / 1.5077 + 780).toFixed(1)}`;
};
const gridLines = (step: number, keep: (n: number) => boolean) => {
  let d = '';
  for (let k = 0; k <= 40 / step; k++) {
    if (!keep(k)) continue;
    const t = k * step;
    d += t === 20 ? `M${project(40, 20)}L${project(20, 20)}M${project(20, 0)}L${project(20, 20)}` : `M${project(0, t)}L${project(40, t)}M${project(t, 0)}L${project(t, 40)}`;
  }
  return d;
};
const minorGrid = gridLines(0.1, (k) => k % 10 !== 0);
const majorGrid = gridLines(1, () => true);

const Scene = () => (
  <svg viewBox="382 234 2374 1582" preserveAspectRatio="xMidYMid slice">
    <defs>
      <linearGradient id="top" gradientUnits="userSpaceOnUse" x1="1130" y1="680" x2="1560" y2="480"><stop offset="0" stopColor="#c4c4c4" /><stop offset="0.3" stopColor="#bbbdbc" /><stop offset="1" stopColor="#a8a9ab" /></linearGradient>
      <linearGradient id="left" gradientUnits="userSpaceOnUse" x1="1120" y1="640" x2="1320" y2="1480"><stop offset="0" stopColor="#868684" /><stop offset="0.5" stopColor="#797979" /><stop offset="1" stopColor="#747474" /></linearGradient>
      <linearGradient id="right" gradientUnits="userSpaceOnUse" x1="1780" y1="680" x2="1640" y2="1420"><stop offset="0" stopColor="#c6c6c6" /><stop offset="0.4" stopColor="#bcbebd" /><stop offset="1" stopColor="#b7b7b9" /></linearGradient>
    </defs>
    <path d={minorGrid} fill="none" stroke="#8b939b" strokeWidth={1} strokeOpacity={0.4} />
    <path d={majorGrid} fill="none" stroke="#85878f" strokeWidth={1.2} strokeOpacity={0.7} />
    <path d="M1234 1300L382 1817" stroke="#9a5a4c" strokeWidth={2} />
    <path d="M1234 1300L1736 1820" stroke="#3f9148" strokeWidth={2} />
    <g stroke="#000" strokeWidth={3} strokeLinejoin="round">
      <path d="M1514 366L1890 633L1411 901L1050 587Z" fill="url(#top)" />
      <path d="M1050 587L1411 901L1443 1563L1146 1257Z" fill="url(#left)" />
      <path d="M1411 901L1890 633L1831 1303L1443 1563Z" fill="url(#right)" />
    </g>
    <rect x={1373} y={510} width={184} height={32} rx={13} fill="#05c44a" stroke="#000" strokeWidth={3} />
    <text x={1465} y={536} textAnchor="middle" fontFamily="Liberation Sans" fontSize={28} fill="#fff">Student Alex</text>
    <path d="M455 1702V1744L409 1772M455 1744L492 1777" fill="none" stroke="#777c82" strokeWidth={2} />
    <g fontFamily="Liberation Sans" fontSize={28} fill="#666a6f" textAnchor="middle">
      <text x={466} y={1704}>z</text>
      <text x={420} y={1773}>x</text>
      <text x={504} y={1779}>y</text>
    </g>
  </svg>
);

/* ---------- collaboration panel ---------- */

const RightColumn = styled.aside`
  display: flex;
  flex-direction: column;
  min-height: 0;
  background: ${C.panel};
  border-radius: 10px 10px 0 0;
`;
const SideBody = styled.div`
  flex: 1;
  display: grid;
  grid-template-columns: minmax(0, 1fr) 40px;
  gap: 8px;
`;
const Collab = styled.div`
  background: #2d2d2f;
`;
const Brand = styled.div`
  display: flex;
  align-items: center;
  gap: 16px;
  height: 80px;
  padding: 0 24px;
  background: #242424;
`;
const CollabBody = styled.div`
  padding: 104px 24px 0;
`;
const Row = styled.div<{ $top?: number; $end?: boolean; $gap?: number }>`
  display: flex;
  align-items: center;
  justify-content: ${(p) => (p.$end ? 'flex-end' : 'flex-start')};
  gap: ${(p) => p.$gap ?? 16}px;
  margin-top: ${(p) => p.$top ?? 0}px;
`;
const LiveBar = styled.div`
  flex: 1;
  display: flex;
  align-items: center;
  gap: 14px;
  height: 52px;
  padding: 0 16px;
  background: #222765;
  color: #9a9ca8;
`;
const Status = styled.span`
  display: flex;
  align-items: center;
  gap: 8px;
  color: ${C.live};
  &::before { content: ''; width: 18px; height: 18px; border-radius: 50%; background: ${C.live}; }
`;
const Push = styled.button<{ $kind?: 'ghost' | 'dark'; $h: number; $w?: string }>`
  height: ${(p) => p.$h}px;
  width: ${(p) => p.$w ?? '100%'};
  border-radius: 8px;
  white-space: pre;
  background: ${(p) => (p.$kind === 'ghost' ? '#333334' : p.$kind === 'dark' ? '#414143' : '#636365')};
  color: ${(p) => (p.$kind === 'ghost' ? '#e8a583' : '#ececec')};
  box-shadow: inset 0 2px 0 rgba(255, 255, 255, ${(p) => (p.$kind === 'ghost' ? 0.02 : 0.1)}), 0 1px 2px rgba(0, 0, 0, 0.4);
`;
const Project = styled.dl`
  margin: 39px 0 0;
  text-align: right;
  dt { color: #8e9096; }
  dd { margin: 0; }
`;
const Rule = styled.hr<{ $above: number }>`
  height: 2px;
  border: 0;
  margin: ${(p) => p.$above}px 0 44px;
  background: #434345;
`;
const Members = styled.ul`
  list-style: none;
  margin: 40px 0 0;
  padding: 0;
  display: flex;
  flex-direction: column;
  align-items: flex-start;
  gap: 12px;
`;
const Member = styled.li`
  display: flex;
  align-items: center;
  gap: 16px;
  height: 84px;
  padding: 0 12px;
  background: #323236;
`;
const Avatar = styled.span<{ $c: string }>`
  width: 44px;
  height: 44px;
  display: grid;
  place-items: center;
  font-weight: 700;
  color: #fff;
  background: ${(p) => p.$c};
`;
const Who = styled.div`
  display: flex;
  flex-direction: column;
  align-items: flex-end;
  min-width: 130px;
  padding-bottom: 3px;
  p { margin: 0; padding-right: 8px; }
  small { font-size: 22px; margin-left: 4px; color: #6e6e70; }
`;
const Badge = styled.span<{ $owner?: boolean }>`
  padding: 1px 12px;
  color: ${(p) => (p.$owner ? '#93a3ff' : '#8e8e92')};
  background: ${(p) => (p.$owner ? '#1f2347' : 'transparent')};
`;
const ChatTitle = styled.h2`
  margin: 0 0 16px;
  font-size: 22px;
  line-height: 28px;
  font-weight: 400;
  text-align: right;
`;
const ChatLog = styled.div`
  height: 260px;
  padding: 0 16px 39px;
  display: flex;
  flex-direction: column;
  justify-content: flex-end;
  align-items: flex-start;
  gap: 26px;
  overflow: hidden;
  border: 2px solid #5a5a5a;
  background: ${C.dark};
`;
const Message = styled.div`
  display: flex;
  flex-direction: column;
  align-items: flex-end;
  font-weight: 500;
  p { margin: 0; }
`;
const Author = styled.p<{ $c: string; $hi: string }>`
  display: flex;
  align-items: center;
  gap: 8px;
  font-weight: 400;
  color: #a3b0fb;
  &::before { content: ''; width: 28px; height: 28px; border-radius: 50%; background: linear-gradient(${(p) => p.$hi}, ${(p) => p.$c} 50%); }
`;
const MessageBox = styled.input`
  flex: 1;
  min-width: 0;
  height: 46px;
  margin-left: 2px;
  padding: 0 5px 12px;
  background: #333338;
  border: 1px solid #404044;
  border-bottom: 2px solid #626266;
  outline: none;
  &::placeholder { color: #717175; opacity: 1; }
`;
const Toggle = styled.label`
  display: flex;
  align-items: center;
  gap: 16px;
  padding-right: 2px;
  color: #8e9096;
  input {
    appearance: none;
    width: 82px;
    height: 42px;
    padding: 5px;
    border-radius: 21px;
    background: #59595c;
    display: flex;
  }
  input::after { content: ''; width: 32px; height: 32px; border-radius: 50%; background: #fff; }
  input:checked { background: #4a66f2; justify-content: flex-end; }
`;
const SideTabs = styled.nav`
  display: flex;
  flex-direction: column;
  background: ${C.panel};
`;
const SideTab = styled.button<{ $on?: boolean; $before?: boolean }>`
  height: 72px;
  display: grid;
  place-items: center;
  background: ${(p) => (p.$on ? 'none' : C.frame)};
  border-bottom-left-radius: ${(p) => (p.$before ? '12px' : '0')};
`;
const SideRest = styled.div`
  flex: 1;
  background: ${C.frame};
  border-top-left-radius: 12px;
`;

/* ---------- command history and status bar ---------- */

const History = styled.section`
  display: grid;
  grid-template-columns: 38px minmax(0, 1fr);
  grid-template-rows: minmax(0, 1fr);
  gap: 2px;
  height: 136px;
  h2 {
    margin: 0;
    padding: 6px 0;
    font-size: 24px;
    line-height: 38px;
    font-weight: 400;
    color: ${C.dim};
    background: ${C.panel};
    border-radius: 0 10px 10px 0;
    writing-mode: vertical-rl;
    rotate: 180deg;
  }
`;
const Log = styled.div`
  display: flex;
  flex-direction: column;
  justify-content: flex-end;
  min-height: 0;
  padding: 0 10px;
  background: ${C.dark};
  font-family: "Liberation Sans", sans-serif;
  font-size: 24px;
  line-height: 28px;
  p { margin: 0; flex: none; }
`;
const StatusBar = styled.footer`
  display: flex;
  align-items: center;
  height: 50px;
  padding: 1px 10px 0;
  background: ${C.panel};
  border-radius: 0 0 14px 14px;
  color: #b4b4b4;
  white-space: nowrap;
`;
const Cell = styled.span<{ $w: number }>`
  width: ${(p) => p.$w}px;
  display: flex;
  align-items: center;
  gap: 12px;
  flex: none;
`;
const Swatch = styled.i`
  width: 32px;
  height: 32px;
  background: #000;
  border: 2px solid #e6e6e6;
`;
const Chip = styled.button<{ $on?: boolean; $w: number }>`
  flex: none;
  width: ${(p) => p.$w}px;
  height: 38px;
  margin-right: 6px;
  border-radius: 5px;
  display: flex;
  align-items: center;
  justify-content: center;
  gap: 20px;
  ${(p) => p.$on && css`
    background: ${C.dark};
    color: #ececec;
    font-weight: 600;
  `}
`;
const Spacer = styled.span`
  flex: 1;
`;

const tabs = ['Standard', 'CPlanes', 'Set View', 'Display', 'Select', 'Viewport Layout', 'Transform', 'Visibility', 'Curve Tools', 'Surface Tools', 'Solid Tools', 'SubD Tools', 'Mesh Tools', 'Render Tools', 'Drafting', 'New in V8'];
const snaps = ['End', 'Near', 'Point', 'Mid', 'Cen', 'Int', 'Perp', 'Tan', 'Quad', 'Knot', 'Vertex', 'Project', 'Disable'];
const history = ['Deleted 1 object.', 'Command: _Box', '1 closed extrusion added to selection.', 'Command: _Save', 'File successfully saved as Rhino 8 file /var/folders/b_/v3p_cw897xv8b45rqbhns2t80000gn/T/RhinoCollab/DEFAULT.3dm.'];
const orange = { c: '#e2850c', hi: '#ffd27a' };
const messages = [
  { who: 'Alex', text: 'joined in like 3 seconds', ...orange },
  { who: 'Student Alex', text: 'watch this, instant change', c: '#3faa2c', hi: '#5fd06a' },
  { who: 'Alex', text: 'very smooth', ...orange },
];

export default function App() {
  const [off, setOff] = useState(new Set(['Tan', 'Project', 'Disable']));
  const [lock, setLock] = useState(true);
  const flip = (s: string) => setOff((o) => { const n = new Set(o); n.has(s) ? n.delete(s) : n.add(s); return n; });
  return (
    <Page>
      <Global />
      <Window>
        <TitleBar>
          <Lights>
            <Light $c="#ff5f57" aria-label="Close" />
            <Light $c="#febc2e" aria-label="Minimize" />
            <Light $c="#1fc23c" aria-label="Zoom" />
          </Lights>
          <Title>
            <svg width={22} height={30} viewBox="0 0 22 30">
              <path d="M0 0H14L22 9V30H0Z" fill="#f2f2f2" />
              <path d="M1 3L8 2Q12 5 12 9L16 12L21 14V20L16 23L12 19L8 15L6 10L2 16Z" fill="#2a2a2a" />
              <path d="M4 6Q8 5 9 9M12 13L17 19" stroke="#ccc" strokeWidth={2} fill="none" />
              <path d="M6 27H16" stroke="#777" strokeWidth={2} />
              <path d="M14 0V9H22Z" fill="#cfcfcf" />
            </svg>
            DEFAULT.3dm
          </Title>
        </TitleBar>
        <Workspace>
          <Dock>
            <Grip><i /><i /><i /><i /></Grip>
            <div>
              <Tabs>
                {tabs.map((t, i) => <Tab key={t} $on={i === 0}>{t}</Tab>)}
                <GearButton aria-label="Toolbar options"><Gear /></GearButton>
              </Tabs>
              <ToolRow>
                {toolbar.map(([n, art, more]) => (
                  <BarTool key={n} aria-label={n} $more={more}><svg width={56} height={54} viewBox="0 0 56 54">{art}</svg></BarTool>
                ))}
              </ToolRow>
            </div>
          </Dock>

          <Main>
            <LeftColumn>
              <Panel>
                <GripBar $row><i /><i /><i /><i /></GripBar>
                <CommandBox placeholder="Command" aria-label="Command" />
                <Palette>
                  {palette.map(([n, art, more]) => (
                    <Tool key={n} aria-label={n} $more={more}><svg width={56} height={56} viewBox="0 0 56 56">{art}</svg></Tool>
                  ))}
                </Palette>
              </Panel>
              <Panel>
                <PanelHead><h2>Osnap</h2><GearButton aria-label="Osnap options"><Gear /></GearButton></PanelHead>
                <IconTabs>
                  <IconTab $on aria-label="Object snaps"><svg width={44} height={44} viewBox="0 0 56 56"><SnapRing /></svg></IconTab>
                  <IconTab aria-label="Selection filter">
                    <svg width={36} height={36} viewBox="0 0 56 56">
                      <Solid p={[['M11 14H43L31 30V46H24V30Z', '#b9b9b9']]} />
                      <ellipse cx={27} cy={15} rx={14} ry={3} fill="#777" />
                      <Line w={3} d="M44 7H52V14M6 41V49H14" />
                    </svg>
                  </IconTab>
                </IconTabs>
                <Checks>
                  {snaps.map((s) => (
                    <Check key={s} $apart={s === 'Disable'}>
                      <input type="checkbox" checked={!off.has(s)} onChange={() => flip(s)} />
                      {s}
                    </Check>
                  ))}
                </Checks>
              </Panel>
            </LeftColumn>

            <Center>
              <Canvas>
                <Scene />
                <ViewTitle>
                  <button>Perspective</button>
                  <button aria-label="Viewport menu"><svg width={16} height={9} viewBox="0 0 16 9"><path d="M0 0H16L8 9Z" fill="#fff" /></svg></button>
                </ViewTitle>
              </Canvas>
              <ViewTabs>
                <ViewModes>
                  <svg width={32} height={28} viewBox="0 0 32 28"><path d="M1 1H31V27H1ZM16 1V27M1 14H31M1 3H8M17 3H23M1 16H8M17 16H23" fill="none" stroke="#858585" strokeWidth={1.5} /></svg>
                  <svg width={32} height={28} viewBox="0 0 32 28"><path d="M1 1H31V27H1ZM1 3H6" fill="none" stroke="#4cae44" strokeWidth={1.5} /></svg>
                </ViewModes>
                {['Perspective', 'Top', 'Front', 'Right', 'Layouts...'].map((t, i) => <ViewTab key={t} $on={i === 0}>{t}</ViewTab>)}
              </ViewTabs>
            </Center>

            <RightColumn>
              <PanelHead><h2>RhinoCollab</h2><GearButton aria-label="Panel options"><Gear /></GearButton></PanelHead>
              <SideBody>
                <Collab>
                  <Brand><svg width={40} height={40} viewBox="0 0 40 40"><SyncLogo /></svg>RhinoCollab</Brand>
                  <CollabBody>
                    <Row>
                      <LiveBar><Status>LIVE</Status>Real-time sync active</LiveBar>
                      <Push $kind="ghost" $h={48} $w="184px">Disconnect</Push>
                    </Row>
                    <Project><dt>Project</dt><dd>DEFAULT</dd></Project>
                    <Rule $above={49} />
                    <Push $h={68}>+ Invite collaborators</Push>
                    <Members>
                      <Member>
                        <Avatar $c="#ef4444">A</Avatar>
                        <Who><p>Alex <small>(you)</small></p><Status>Online</Status></Who>
                        <Badge $owner>OWNER</Badge>
                      </Member>
                      <Member>
                        <Avatar $c="#a855f7">S</Avatar>
                        <Who><p>Student Alex</p><Status>Online</Status></Who>
                        <Badge>EDITOR</Badge>
                      </Member>
                    </Members>
                    <Rule $above={56} />
                    <ChatTitle>Chat</ChatTitle>
                    <ChatLog>
                      {messages.map((m, i) => <Message key={i}><Author $c={m.c} $hi={m.hi}>{m.who}</Author><p>{m.text}</p></Message>)}
                    </ChatLog>
                    <Row $top={16} $gap={10}>
                      <MessageBox placeholder="Message the team..." aria-label="Message the team" />
                      <Push $h={52} $w="112px">Send</Push>
                    </Row>
                    <Rule $above={44} />
                    <Row $end>
                      <Toggle>Lock dots<input type="checkbox" checked={lock} onChange={() => setLock(!lock)} /></Toggle>
                    </Row>
                    <Row $top={66}><Push $kind="dark" $h={60}>{'Help  Support'}</Push></Row>
                  </CollabBody>
                </Collab>
                <SideTabs>
                  {sideTabs.map(([n, art], i) => (
                    <SideTab key={n} aria-label={n} $on={i === 8} $before={i === 7}><svg width={40} height={40} viewBox="4 4 48 48">{art}</svg></SideTab>
                  ))}
                  <SideRest />
                </SideTabs>
              </SideBody>
            </RightColumn>
          </Main>

          <History>
            <h2>Comma...</h2>
            <Log>{history.map((l) => <p key={l}>{l}</p>)}</Log>
          </History>
          <StatusBar>
            <Cell $w={105}>
              <svg width={24} height={24} viewBox="0 0 24 24"><path fillRule="evenodd" d="M0 0H24V24H0ZM8 4V20H20V4Z" fill="#b8b8b8" /></svg>
              <svg width={30} height={26} viewBox="0 0 30 26"><path d="M0 2H3M0 13H3M0 24H3M8 2H30M8 13H30M8 24H30" stroke="#a8a8a8" strokeWidth={3} /></svg>
            </Cell>
            <Cell $w={147}>CPlane</Cell>
            <Cell $w={133}>x 3.850</Cell>
            <Cell $w={178}>y 124.041</Cell>
            <Cell $w={130}>z 0</Cell>
            <Cell $w={165}>Millimeters</Cell>
            <Cell $w={221}><Swatch />Default</Cell>
            <Chip $w={136}>Grid Snap</Chip>
            <Chip $w={96} $on>Ortho</Chip>
            <Chip $w={100}>Planar</Chip>
            <Chip $w={102} $on>Osnap</Chip>
            <Chip $w={158} $on>SmartTrack</Chip>
            <Chip $w={211} $on>Gumball (World)</Chip>
            <Chip $w={292}>
              <svg width={20} height={26} viewBox="0 0 20 26"><path d="M5 12V6Q5 2 10 2T15 6V12" fill="none" stroke="#8a8a8a" strokeWidth={3} /><path d="M1 11H19V25H1Z" fill="#e4e4e4" /></svg>
              Auto CPlane (Object)
            </Chip>
            <Chip $w={206}>Record History</Chip>
            <Chip $w={88} $on>Filter</Chip>
            <Chip $w={270}>Memory use: 438 MB</Chip>
            <Spacer />
            <svg width={24} height={24} viewBox="0 0 24 24"><path fillRule="evenodd" d="M0 0H24V24H0ZM4 4V20H16V4Z" fill="#b8b8b8" /></svg>
          </StatusBar>
        </Workspace>
      </Window>
    </Page>
  );
}
